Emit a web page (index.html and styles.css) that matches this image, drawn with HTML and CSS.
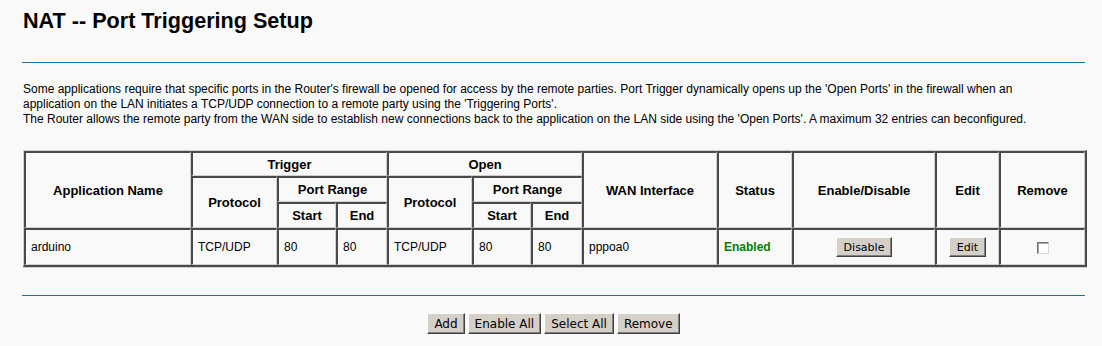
FILE: index.html
```html
<!DOCTYPE html>
<html lang="en">
<head>
  <meta charset="UTF-8">
  <title>NAT -- Port Triggering Setup</title>
  <link rel="stylesheet" href="styles.css">
</head>
<body>
  <div class="page">
    <h1 class="title">NAT -- Port Triggering Setup</h1>
    <div class="rule"></div>

    <p class="intro">Some applications require that specific ports in the Router's firewall be opened for access by the remote parties. Port Trigger dynamically opens up the 'Open Ports' in the firewall when an application on the LAN initiates a TCP/UDP connection to a remote party using the 'Triggering Ports'.<br>The Router allows the remote party from the WAN side to establish new connections back to the application on the LAN side using the 'Open Ports'. A maximum 32 entries can beconfigured.</p>

    <!-- trigger table -->
    <table class="grid">
      <colgroup>
        <col style="width:167px">
        <col style="width:86px">
        <col style="width:59px">
        <col style="width:51px">
        <col style="width:85px">
        <col style="width:59px">
        <col style="width:51px">
        <col style="width:135px">
        <col style="width:75px">
        <col style="width:143px">
        <col style="width:64px">
        <col style="width:86px">
      </colgroup>
      <thead>
        <tr class="head-row first">
          <th rowspan="3">Application Name</th>
          <th colspan="3">Trigger</th>
          <th colspan="3">Open</th>
          <th rowspan="3">WAN Interface</th>
          <th rowspan="3">Status</th>
          <th rowspan="3">Enable/Disable</th>
          <th rowspan="3">Edit</th>
          <th rowspan="3">Remove</th>
        </tr>
        <tr class="head-row">
          <th rowspan="2">Protocol</th>
          <th colspan="2">Port Range</th>
          <th rowspan="2">Protocol</th>
          <th colspan="2">Port Range</th>
        </tr>
        <tr class="head-row">
          <th>Start</th>
          <th>End</th>
          <th>Start</th>
          <th>End</th>
        </tr>
      </thead>
      <tbody>
        <tr class="data-row">
          <td>arduino</td>
          <td>TCP/UDP</td>
          <td>80</td>
          <td>80</td>
          <td>TCP/UDP</td>
          <td>80</td>
          <td>80</td>
          <td>pppoa0</td>
          <td class="status-on">Enabled</td>
          <td class="center"><button class="btn">Disable</button></td>
          <td class="center"><button class="btn">Edit</button></td>
          <td class="center"><input type="checkbox" class="check"></td>
        </tr>
      </tbody>
    </table>

    <div class="rule rule-bottom"></div>

    <div class="actions">
      <button class="btn btn-big">Add</button>
      <button class="btn btn-big">Enable All</button>
      <button class="btn btn-big">Select All</button>
      <button class="btn btn-big">Remove</button>
    </div>
  </div>
</body>
</html>
```

FILE: styles.css
```css
body {
  margin: 0;
  background-color: #f9f9f9;
  font-family: "Liberation Sans", Arial, sans-serif;
  color: #000;
}
.page {
  width: 1063px;
  padding-left: 22px;
}
.title {
  margin: 9px 0 0 1px;
  font-size: 21.6px;
  line-height: 24px;
  font-weight: bold;
}
.rule {
  height: 1px;
  margin-top: 29px;
  background-color: #1b72a6;
}
.rule-bottom {
  margin-top: 28px;
}
.intro {
  width: 1040px;
  margin: 19px 0 0 1px;
  font-size: 12px;
  line-height: 15px;
}
.grid {
  width: 1062px;
  margin-top: 23px;
  margin-left: 1px;
  table-layout: fixed;
  border-collapse: separate;
  border-spacing: 0;
  border-style: solid;
  border-width: 1px 2px 2px 1px;
  border-color: #cfcfcf #4a4a4a #4a4a4a #cfcfcf;
  box-shadow: 0 1px #cfcfcf;
}
.grid th, .grid td {
  border-style: solid;
  border-width: 2px 1px 1px 2px;
  border-color: #4a4a4a #cfcfcf #cfcfcf #4a4a4a;
  padding: 0;
}
.grid th {
  font-size: 13px;
  font-weight: bold;
  text-align: center;
}
.grid td {
  font-size: 12px;
  text-align: left;
  padding-left: 5px;
}
.head-row {
  height: 26px;
}
.head-row.first {
  height: 25px;
}
.data-row {
  height: 37px;
}
.grid td.center {
  text-align: center;
  padding-left: 0;
}
.status-on {
  color: #008000;
  font-weight: bold;
}
.btn {
  font-family: "DejaVu Sans", Tahoma, sans-serif;
  font-size: 11px;
  color: #000;
  background-color: #d4d0c8;
  height: 20px;
  padding: 0 7px;
  border: 1px solid;
  border-color: #ffffff #404040 #404040 #ffffff;
  box-shadow: inset -1px -1px #808080;
  cursor: pointer;
}
.btn-big {
  height: 21px;
  font-size: 12px;
  padding: 0 6px;
}
.check {
  appearance: none;
  width: 12px;
  height: 12px;
  margin: 0;
  vertical-align: middle;
  background-color: #fff;
  border: 1px solid;
  border-color: #707070 #d8d8d8 #d8d8d8 #707070;
  box-shadow: inset 1px 1px #a8a8a8;
}
.actions {
  display: flex;
  justify-content: center;
  gap: 3px;
  margin-top: 17px;
}
```
